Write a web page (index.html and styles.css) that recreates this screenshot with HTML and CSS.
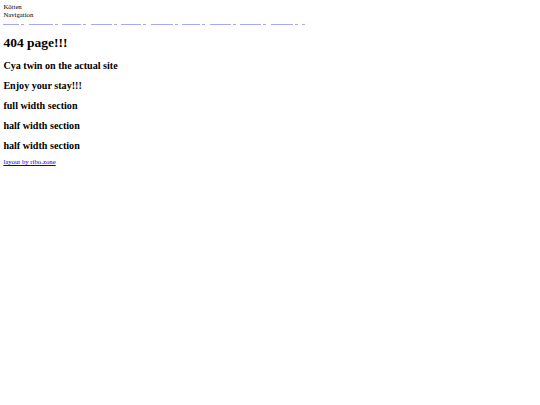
FILE: index.html
```html
<!DOCTYPE html>
<html lang="en">
<head>
<meta charset="utf-8">
<title>404 page!!!</title>
<link rel="stylesheet" href="styles.css">
</head>
<body>
<header class="site-header">
  <div class="brand">Kötten</div>
  <div class="nav-title">Navigation</div>
  <nav class="nav-links">
    <a href="#" class="nav-link" aria-label="link 1"><span class="seg long"></span><span class="seg short"></span></a>
    <a href="#" class="nav-link" aria-label="link 2"><span class="seg long"></span><span class="seg short"></span></a>
    <a href="#" class="nav-link" aria-label="link 3"><span class="seg long"></span><span class="seg short"></span></a>
    <a href="#" class="nav-link" aria-label="link 4"><span class="seg long"></span><span class="seg short"></span></a>
    <a href="#" class="nav-link" aria-label="link 5"><span class="seg long"></span><span class="seg short"></span></a>
    <a href="#" class="nav-link" aria-label="link 6"><span class="seg long"></span><span class="seg short"></span></a>
    <a href="#" class="nav-link" aria-label="link 7"><span class="seg long"></span><span class="seg short"></span></a>
    <a href="#" class="nav-link" aria-label="link 8"><span class="seg long"></span><span class="seg short"></span></a>
    <a href="#" class="nav-link" aria-label="link 9"><span class="seg long"></span><span class="seg short"></span></a>
    <a href="#" class="nav-link" aria-label="link 10"><span class="seg long"></span><span class="seg short"></span></a>
    <a href="#" class="nav-link" aria-label="link 11"><span class="seg short"></span></a>
  </nav>
</header>
<main>
  <h1 class="title">404 page!!!</h1>
  <h2 class="sub">Cya twin on the actual site</h2>
  <h2 class="sub">Enjoy your stay!!!</h2>
  <section><h2 class="sub">full width section</h2></section>
  <section><h2 class="sub">half width section</h2></section>
  <section class="last"><h2 class="sub">half width section</h2></section>
</main>
<footer class="site-footer"><a href="#" class="credit">layout by ribo.zone</a></footer>
</body>
</html>
```
FILE: styles.css
```css
html { background: #fff; }
body {
  margin: 3.375px;
  font-family: "Liberation Serif", "Times New Roman", serif;
  font-size: 6.75px;
  line-height: 1.15;
  color: #000;
}
.brand, .nav-title { height: 7.7px; }
.nav-links {
  display: flex;
  align-items: flex-end;
  height: 7.7px;
}
.nav-link {
  display: flex;
  gap: 2px;
  margin-right: 4.5px;
  padding-bottom: 1px;
}
.seg {
  display: block;
  height: 1px;
  background: #a9a9e6;
}
.seg.long { width: 20px; }
.seg.short { width: 3px; }
.nav-link:nth-child(1) .long { width: 16px; }
.nav-link:nth-child(2) .long { width: 24px; }
.nav-link:nth-child(3) .long { width: 19px; }
.nav-link:nth-child(4) .long { width: 21px; }
.nav-link:nth-child(5) .long { width: 20px; }
.nav-link:nth-child(6) .long { width: 22px; }
.nav-link:nth-child(7) .long { width: 18px; }
.nav-link:nth-child(8) .long { width: 21px; }
.nav-link:nth-child(9) .long { width: 21px; }
.nav-link:nth-child(10) .long { width: 22px; }
.title {
  font-size: 13.5px;
  margin: 9.05px 0;
}
.sub {
  font-size: 10.125px;
  margin: 8.4px 0;
}
.last .sub { margin-bottom: 6.5px; }
.credit { color: #0000ee; }
```
